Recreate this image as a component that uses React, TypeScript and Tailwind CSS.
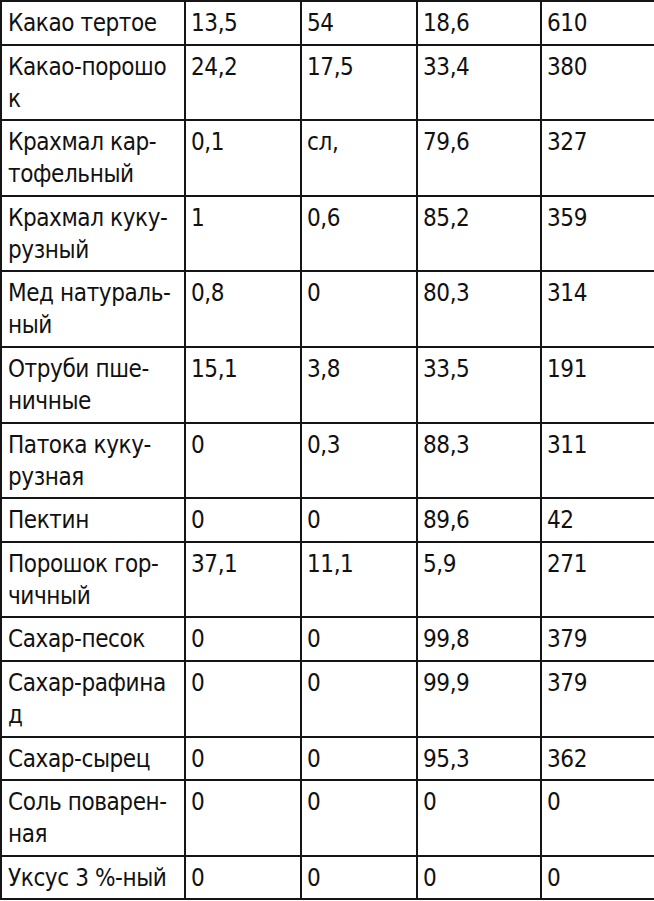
const rows: { name: string[]; vals: string[] }[] = [
  { name: ["Какао тертое"], vals: ["13,5", "54", "18,6", "610"] },
  { name: ["Какао-порошо", "к"], vals: ["24,2", "17,5", "33,4", "380"] },
  { name: ["Крахмал кар-", "тофельный"], vals: ["0,1", "сл,", "79,6", "327"] },
  { name: ["Крахмал куку-", "рузный"], vals: ["1", "0,6", "85,2", "359"] },
  { name: ["Мед натураль-", "ный"], vals: ["0,8", "0", "80,3", "314"] },
  { name: ["Отруби пше-", "ничные"], vals: ["15,1", "3,8", "33,5", "191"] },
  { name: ["Патока куку-", "рузная"], vals: ["0", "0,3", "88,3", "311"] },
  { name: ["Пектин"], vals: ["0", "0", "89,6", "42"] },
  { name: ["Порошок гор-", "чичный"], vals: ["37,1", "11,1", "5,9", "271"] },
  { name: ["Сахар-песок"], vals: ["0", "0", "99,8", "379"] },
  { name: ["Сахар-рафина", "д"], vals: ["0", "0", "99,9", "379"] },
  { name: ["Сахар-сырец"], vals: ["0", "0", "95,3", "362"] },
  { name: ["Соль поварен-", "ная"], vals: ["0", "0", "0", "0"] },
  { name: ["Уксус 3 %-ный"], vals: ["0", "0", "0", "0"] },
]

export default function App() {
  return (
    <div className="w-[654px] bg-white text-[#111] font-['DejaVu_Sans_Condensed','DejaVu_Sans',sans-serif] text-[24px] leading-[32px] tracking-[-0.4px]">
      <table className="w-[654px] table-fixed border-collapse">
        <colgroup>
          <col className="w-[184px]" />
          <col className="w-[116px]" />
          <col className="w-[116px]" />
          <col className="w-[124px]" />
          <col className="w-[114px]" />
        </colgroup>
        <tbody>
          {rows.map((row) => (
            <tr key={row.name.join("")}>
              <td className="border-2 border-[#151515] align-top pl-[6px] pr-0 pt-[5px] pb-[4.6px] whitespace-nowrap">
                {row.name.map((line, i) => (
                  <div key={i}>{line}</div>
                ))}
              </td>
              {row.vals.map((v, i) => (
                <td key={i} className="border-2 border-[#151515] align-top pl-[5px] pt-[5px] pb-[4.6px]">
                  {v}
                </td>
              ))}
            </tr>
          ))}
        </tbody>
      </table>
    </div>
  )
}
